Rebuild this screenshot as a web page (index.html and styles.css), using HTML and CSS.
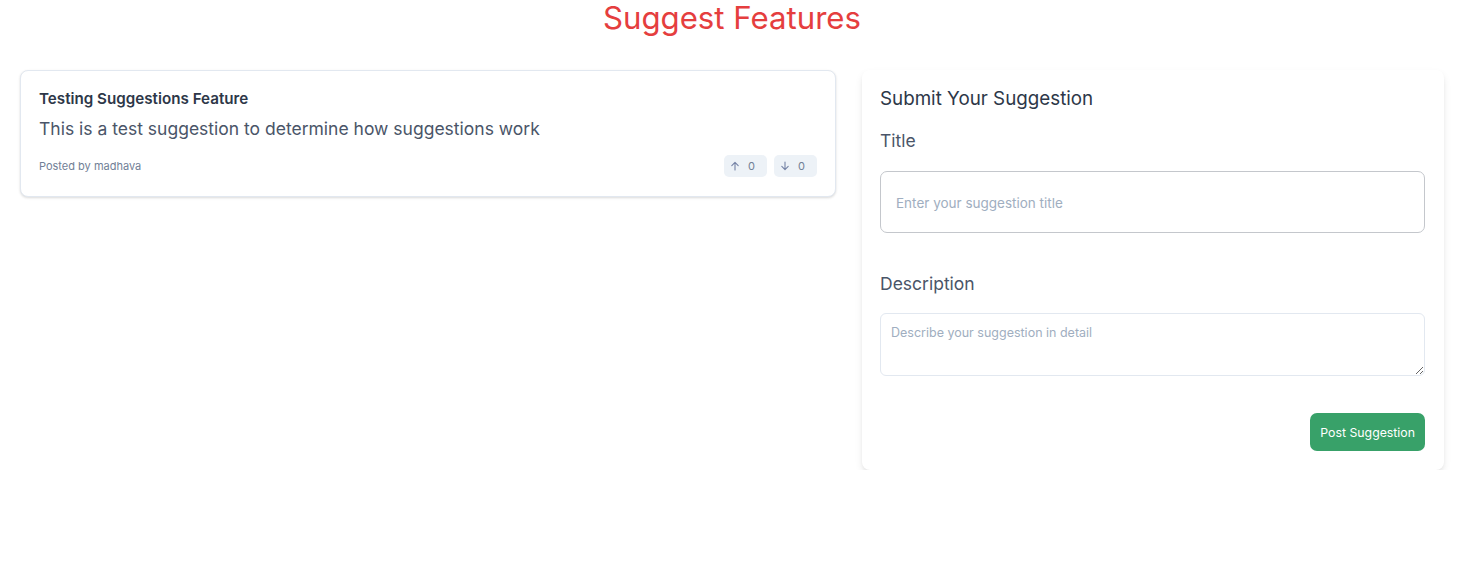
FILE: index.html
```html
<!DOCTYPE html>
<html>
<head>
<meta charset="utf-8">
<link rel="stylesheet" href="styles.css">
</head>
<body>
<div class="page">
  <h1 class="page-title">Suggest Features</h1>
  <div class="layout">
    <div class="list">
      <div class="card suggestion">
        <div class="s-title">Testing Suggestions Feature</div>
        <div class="s-desc">This is a test suggestion to determine how suggestions work</div>
        <div class="s-footer">
          <span class="s-author">Posted by madhava</span>
          <div class="votes">
            <button class="vote"><svg width="10" height="10" viewBox="0 0 10 10" fill="none" stroke="currentColor" stroke-width="1.1" stroke-linecap="round" stroke-linejoin="round"><path d="M5 9V1.5M1.8 4.6L5 1.4l3.2 3.2"/></svg><span>0</span></button>
            <button class="vote"><svg width="10" height="10" viewBox="0 0 10 10" fill="none" stroke="currentColor" stroke-width="1.1" stroke-linecap="round" stroke-linejoin="round"><path d="M5 1v7.5M1.8 5.4L5 8.6l3.2-3.2"/></svg><span>0</span></button>
          </div>
        </div>
      </div>
    </div>
    <div class="card form">
      <h2 class="form-title">Submit Your Suggestion</h2>
      <label class="label label-title">Title</label>
      <input class="input" type="text" placeholder="Enter your suggestion title">
      <label class="label label-desc">Description</label>
      <textarea class="textarea" placeholder="Describe your suggestion in detail"></textarea>
      <div class="actions">
        <button class="submit">Post Suggestion</button>
      </div>
    </div>
  </div>
</div>
</body>
</html>
```

FILE: styles.css
```css
* { box-sizing: border-box; }
html, body { margin: 0; padding: 0; background: #fff; }
body { font-family: Inter, "Noto Sans", sans-serif; color: #2d3748; }
.page { padding: 0 37px 0 20px; }
.page-title {
  margin: 0;
  text-align: center;
  font-size: 31.2px;
  line-height: 36px;
  font-weight: 400;
  color: #e53e3e;
}
.layout {
  margin-top: 34px;
  display: grid;
  grid-template-columns: 1fr 582px;
  gap: 26px;
  align-items: start;
}
.card { background: #fff; border-radius: 8px; }
.suggestion {
  border: 1px solid #e2e8f0;
  box-shadow: 0 1px 3px rgba(0,0,0,0.1), 0 1px 2px rgba(0,0,0,0.05);
  padding: 17px 18px 19px;
}
.s-title { font-size: 15.2px; font-weight: 600; line-height: 22px; color: #2d3748; }
.s-desc { margin-top: 6px; font-size: 17.5px; line-height: 26px; color: #4a5568; }
.s-footer {
  margin-top: 13px;
  display: flex;
  align-items: center;
  justify-content: space-between;
}
.s-author { font-size: 11px; color: #718096; }
.votes { display: flex; gap: 7px; }
.vote {
  display: flex;
  align-items: center;
  gap: 8px;
  height: 22px;
  width: 43px;
  padding: 0 0 0 6px;
  border: 0;
  border-radius: 5px;
  background: #edf2f7;
  color: #718096;
  font-family: Inter, sans-serif;
  font-size: 11px;
}
.vote svg { color: #7583a6; }
.form {
  box-shadow: 0 4px 8px -1px rgba(0,0,0,0.1), 0 2px 4px -1px rgba(0,0,0,0.06);
  padding: 17px 19px 19px 18px;
  display: flex;
  flex-direction: column;
}
.form-title { margin: 0; font-size: 18.8px; font-weight: 400; line-height: 23px; color: #2d3748; }
.label { display: block; font-size: 17.5px; line-height: 24px; color: #4a5568; }
.label-title { margin-top: 19px; }
.input {
  margin-top: 18px;
  height: 62px;
  width: 100%;
  border: 1px solid #c4c7cc;
  border-radius: 7px;
  padding: 2px 15px 0;
  font-family: Inter, sans-serif;
  font-size: 13.5px;
  color: #2d3748;
}
.input::placeholder { color: #a0aec0; }
.label-desc { margin-top: 39px; }
.textarea {
  margin-top: 17px;
  height: 63px;
  width: 100%;
  border: 1px solid #e2e8f0;
  border-radius: 6px;
  padding: 11px 10px 10px;
  font-family: Inter, sans-serif;
  font-size: 12.5px;
  line-height: 16px;
  color: #2d3748;
  resize: vertical;
}
.textarea::placeholder { color: #a0aec0; }
.actions { margin-top: 37px; display: flex; justify-content: flex-end; }
.submit {
  height: 38px;
  padding: 0 10px;
  white-space: nowrap;
  border: 0;
  border-radius: 7px;
  background: #38a169;
  color: #fff;
  font-family: Inter, sans-serif;
  font-size: 12.3px;
}
```
